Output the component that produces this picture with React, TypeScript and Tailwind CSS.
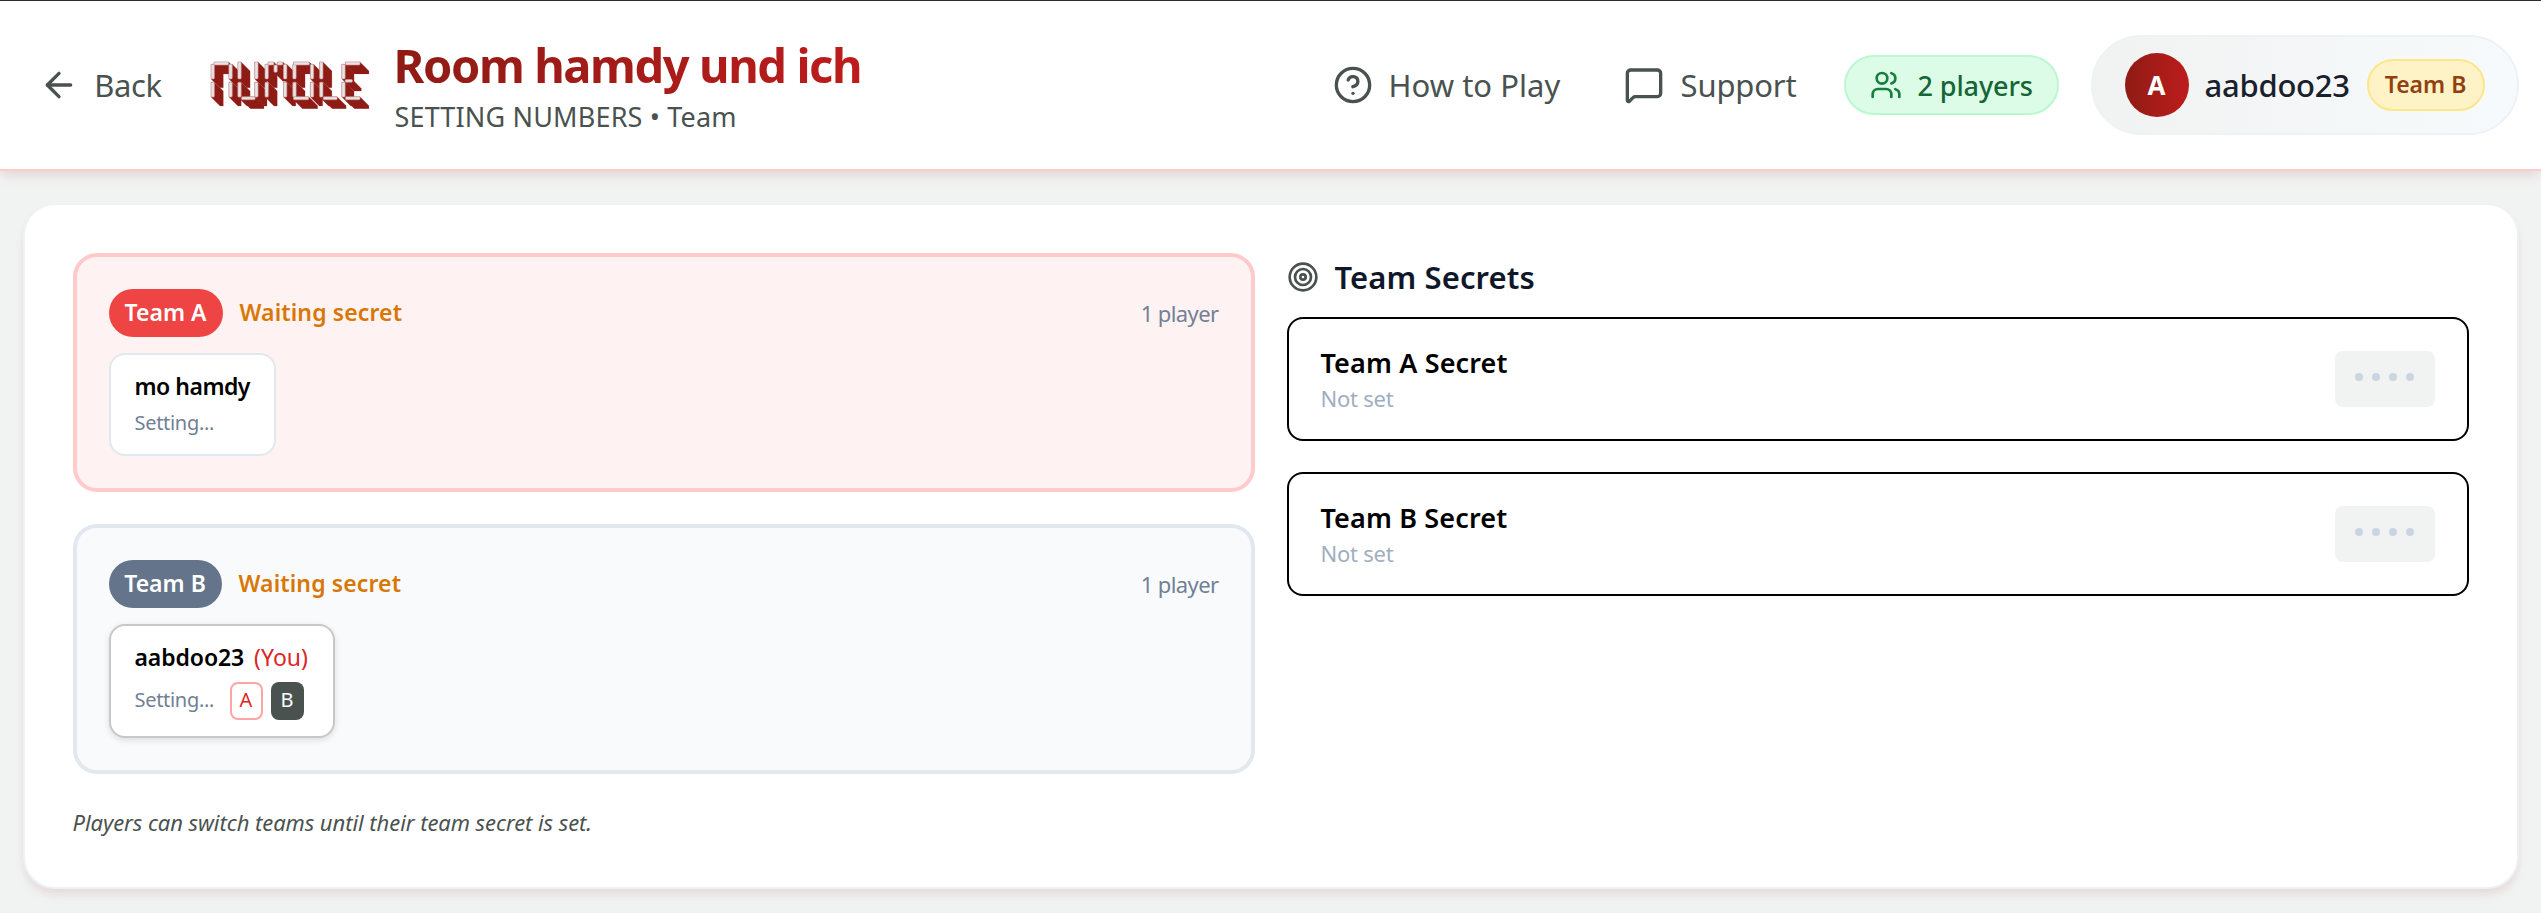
import React from "react";
import { ArrowLeft, CircleHelp, MessageSquare, Target, Users } from "lucide-react";

type Segment = [x1: number, y1: number, x2: number, y2: number];

const DEPTH = 27;

const LOGO_SEGMENTS: Segment[] = [
  // N
  [62, 73, 72, 117], [62, 127, 72, 172], [71, 66, 115, 75], [116, 73, 126, 117], [116, 127, 126, 172],
  // U
  [143, 66, 153, 117], [143, 127, 153, 172], [194, 66, 204, 117], [194, 127, 204, 172], [154, 171, 195, 180],
  // M
  [225, 73, 235, 117], [225, 127, 235, 172], [234, 66, 252, 75], [252, 75, 262, 97], [262, 66, 279, 75],
  [281, 73, 291, 117], [281, 127, 291, 172],
  // D
  [309, 73, 319, 117], [309, 127, 319, 172], [311, 66, 359, 75], [362, 73, 372, 117], [362, 127, 372, 172], [311, 171, 357, 180],
  // L
  [390, 66, 400, 117], [390, 127, 400, 172], [401, 171, 443, 180],
  // E
  [457, 73, 467, 117], [457, 127, 467, 172], [468, 66, 512, 75], [467, 119, 489, 127], [468, 171, 512, 180],
];

function Logo() {
  return (
    <svg viewBox="60 63 481 145" className="h-12 w-40 shrink-0">
      {LOGO_SEGMENTS.map(([x1, y1, x2, y2], i) => (
        <polygon
          key={i}
          points={`${x1},${y1} ${x2},${y1} ${x2 + DEPTH},${y1 + DEPTH} ${x2 + DEPTH},${y2 + DEPTH} ${x1 + DEPTH},${y2 + DEPTH} ${x1},${y2}`}
          fill="#8f1b15"
          stroke="#9a3530"
          strokeWidth="0.6"
          strokeLinejoin="round"
        />
      ))}
      {LOGO_SEGMENTS.map(([x1, y1, x2, y2], i) => (
        <rect key={i} x={x1} y={y1} width={x2 - x1} height={y2 - y1} rx="3" fill="#e6e4e4" stroke="#cc9a98" strokeWidth="1.8" />
      ))}
    </svg>
  );
}

function Header() {
  return (
    <header className="relative flex h-[171px] items-center justify-between border-t border-b-2 border-t-[#2d2a32] border-b-[#fecaca] bg-white pr-[22.5px] pl-[38.5px] shadow-[0_8px_12px_-2px_rgba(143,29,22,0.08),0_4px_8px_-2px_rgba(143,29,22,0.06)]">
      <div className="flex items-center">
        <button className="flex items-center gap-[15px] text-[31px] leading-[48px] tracking-[-0.34px] text-[#4a5250]">
          <ArrowLeft size={40} />
          <span className="w-[69px]">Back</span>
        </button>
        <div className="ml-[47px] flex items-center gap-6">
          <Logo />
          <div className="pt-0.5">
            <h1 className="w-[470px] bg-linear-to-r from-[#8f1b15] to-[#bd1c1c] bg-clip-text text-[47px] leading-[60px] font-bold tracking-[-1.4px] text-transparent">
              Room hamdy und ich
            </h1>
            <p className="mt-0.5 pl-px text-[27px] leading-[40px] tracking-[0.16px] text-[#4a5250]">SETTING NUMBERS • Team</p>
          </div>
        </div>
      </div>

      <div className="flex items-center whitespace-nowrap">
        <button className="mr-[62px] flex w-[229px] items-center gap-4 text-[31px] leading-[48px] tracking-[0.03px] text-[#4a5250]">
          <CircleHelp size={40} className="shrink-0" />
          How to Play
        </button>
        <button className="mr-[46px] flex w-[174px] items-center gap-[17px] text-[31px] leading-[48px] tracking-[-0.14px] text-[#4a5250]">
          <MessageSquare size={40} className="shrink-0" />
          Support
        </button>
        <div className="flex h-[60px] w-[215px] items-center gap-4 rounded-full border-2 border-[#bbf7d0] bg-[#dcfce7] px-6 text-[27px] leading-[39px] font-medium tracking-[-0.1px] text-[#166534]">
          <Users size={32} className="shrink-0 text-[#15803d]" />
          2 players
        </div>
        <div className="ml-8 flex h-[100px] w-[428px] items-center rounded-full border-2 border-[#edf2f7] bg-linear-to-r from-[#f1f3f2] to-[#f7fafc] px-8">
          <div className="flex size-16 shrink-0 items-center justify-center rounded-full bg-linear-to-r from-[#8f1b15] to-[#bd1c1c] text-[26px] leading-[40px] font-bold text-white">
            A
          </div>
          <span className="ml-4 w-[146px] text-[31px] leading-[48px] font-medium tracking-[-0.25px] text-[#1a202c]">aabdoo23</span>
          <span className="ml-4 flex h-[52px] w-[118px] items-center justify-center rounded-full border-2 border-[#fde68a] bg-[#fef3c7] pb-0.5 text-[23px] leading-[36px] font-semibold text-[#92400e]">
            Team B
          </span>
        </div>
      </div>
    </header>
  );
}

interface TeamPanelProps {
  name: string;
  panelClass: string;
  badgeClass: string;
  children: React.ReactNode;
}

function TeamPanel({ name, panelClass, badgeClass, children }: TeamPanelProps) {
  return (
    <section className={`flex flex-col items-start rounded-3xl border-4 p-8 ${panelClass}`}>
      <div className="flex h-12 w-full items-center text-[23px] leading-[36px]">
        <span className={`flex h-12 items-center justify-center rounded-full pb-0.5 font-semibold text-white ${badgeClass}`}>{name}</span>
        <span className="ml-[17px] pb-0.5 font-semibold tracking-[0.12px] text-[#d97706]">Waiting secret</span>
        <span className="ml-auto pb-px text-[22px] tracking-[-0.6px] text-[#718096]">1 player</span>
      </div>
      {children}
    </section>
  );
}

function SecretCard({ title }: { title: string }) {
  return (
    <div className="flex h-[123.5px] items-center justify-between rounded-2xl border-2 border-black bg-white px-8">
      <div>
        <h3 className="text-[27px] leading-[40px] font-semibold tracking-[0.14px] text-black">{title}</h3>
        <p className="text-[22px] leading-[31px] tracking-[-0.25px] text-[#a0aec0]">Not set</p>
      </div>
      <div className="flex h-14 w-[100px] items-center justify-center gap-[8.8px] rounded-lg bg-[#f1f3f2] pb-1">
        {[0, 1, 2, 3].map((i) => (
          <span key={i} className="size-2 rounded-full bg-[#cbd5e1]" />
        ))}
      </div>
    </div>
  );
}

export default function App() {
  return (
    <div className="h-[913px] overflow-hidden bg-[#f1f3f2] font-['Noto_Sans',sans-serif]">
      <Header />
      <main className="mx-auto mt-8 h-[686px] w-[2496px] rounded-[32px] border-2 border-[#edf2f7] bg-white p-12 shadow-[0_8px_12px_-2px_rgba(143,29,22,0.08),0_4px_8px_-2px_rgba(143,29,22,0.06)]">
        <div className="grid grid-cols-2 items-start gap-8">
          <div className="flex flex-col gap-8">
            <TeamPanel name="Team A" panelClass="border-[#fecaca] bg-[#fef2f2]" badgeClass="w-[114px] bg-[#ef4444]">
              <div className="mt-4 h-[103px] w-[167px] rounded-2xl border-2 border-[#e2e8f0] bg-white px-6 pt-[13px] whitespace-nowrap">
                <div className="text-[23px] leading-[36px] font-semibold tracking-[-0.5px] text-black">mo hamdy</div>
                <div className="mt-[3px] text-[20px] leading-[32px] tracking-[-0.3px] text-[#718096]">Setting...</div>
              </div>
            </TeamPanel>
            <TeamPanel name="Team B" panelClass="border-[#e2e8f0] bg-[#f8fafc]" badgeClass="w-[113px] bg-[#64748b]">
              <div className="mt-4 h-[114px] w-[226px] rounded-2xl border-2 border-[#c8c8c8] bg-white px-6 pt-[13px] whitespace-nowrap shadow-[0_2px_6px_rgba(0,0,0,0.12)]">
                <div className="flex gap-[10px] text-[23px] leading-[36px] text-black">
                  <span className="font-semibold tracking-[-0.1px]">aabdoo23</span>
                  <span className="text-[#dc2626]">(You)</span>
                </div>
                <div className="mt-[7px] flex items-center text-[20px] leading-[32px]">
                  <span className="w-[95px] pb-0.5 tracking-[-0.3px] text-[#718096]">Setting...</span>
                  <button className="flex h-[38px] w-[33px] items-center justify-center rounded-lg border-2 border-[#fca5a5] bg-white pb-0.5 text-[#dc2626]">A</button>
                  <button className="ml-2 flex h-[38px] w-[33px] items-center justify-center rounded-lg bg-[#4a5250] pb-0.5 text-white">B</button>
                </div>
              </div>
            </TeamPanel>
          </div>

          <div>
            <h2 className="flex h-12 items-center gap-4 text-[31px] leading-[48px] font-semibold tracking-[0.1px] text-[#0f172a]">
              <Target size={32} className="text-[#4a5250]" />
              Team Secrets
            </h2>
            <div className="mt-4 flex flex-col gap-[31.5px]">
              <SecretCard title="Team A Secret" />
              <SecretCard title="Team B Secret" />
            </div>
          </div>
        </div>
        <p className="mt-[30px] text-[22px] leading-[36px] tracking-[-0.06px] text-[#4a5250] italic">
          Players can switch teams until their team secret is set.
        </p>
      </main>
    </div>
  );
}
